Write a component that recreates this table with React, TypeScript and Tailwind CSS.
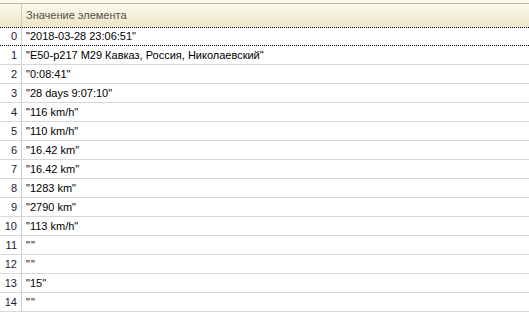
const rows = [
  '"2018-03-28 23:06:51"',
  '"E50-р217 М29 Кавказ, Россия, Николаевский"',
  '"0:08:41"',
  '"28 days 9:07:10"',
  '"116 km/h"',
  '"110 km/h"',
  '"16.42 km"',
  '"16.42 km"',
  '"1283 km"',
  '"2790 km"',
  '"113 km/h"',
  '""',
  '""',
  '"15"',
  '""',
];

export default function App() {
  return (
    <div className="w-[529px] h-[320px] bg-white overflow-hidden font-['Liberation_Sans',Arial,sans-serif] text-[11px] text-black">
      <div className="h-[4px] bg-[#fcf9ec] border-b border-[#c7b994]" />
      <div className="flex h-[23px] bg-gradient-to-b from-[#fbf9ee] to-[#eee5c6] text-[#505050]">
        <div className="w-[22px] border-r border-[#d6ccae]" />
        <div className="flex items-center pl-[4px]">Значение элемента</div>
      </div>
      {rows.map((value, i) => (
        <div
          key={i}
          className={
            i === 0
              ? "flex h-[19px] border-y border-dotted border-black"
              : "flex h-[19px] border-b border-[#d3d9dd]"
          }
        >
          <div className="w-[22px] shrink-0 flex items-center justify-end pr-[4px] border-r border-[#c9cfd3] text-[#1a1a3a]">
            {i}
          </div>
          <div
            className={
              value === '""'
                ? "flex items-center pl-[4px] whitespace-pre tracking-[1px]"
                : "flex items-center pl-[4px] whitespace-pre"
            }
          >
            {value}
          </div>
        </div>
      ))}
    </div>
  );
}
